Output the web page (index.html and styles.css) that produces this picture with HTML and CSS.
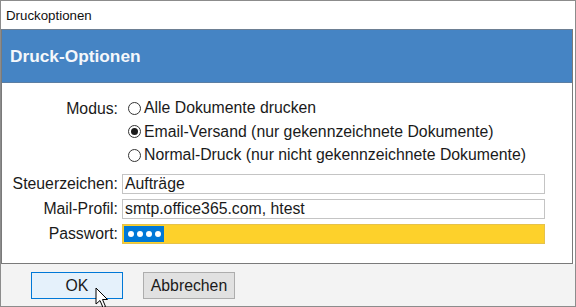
FILE: index.html
```html
<!DOCTYPE html>
<html lang="de">
<head>
<meta charset="utf-8">
<title>Druckoptionen</title>
<link rel="stylesheet" href="styles.css">
</head>
<body>
<div class="window">
  <div class="titlebar">Druckoptionen</div>
  <div class="panel">
    <div class="header">Druck-Optionen</div>
    <div class="content">
      <div class="row modus">
        <div class="label">Modus:</div>
        <div class="radios">
          <div class="radio"><span class="circle"></span><span>Alle Dokumente drucken</span></div>
          <div class="radio"><span class="circle checked"></span><span>Email-Versand (nur gekennzeichnete Dokumente)</span></div>
          <div class="radio"><span class="circle"></span><span>Normal-Druck (nur nicht gekennzeichnete Dokumente)</span></div>
        </div>
      </div>
      <div class="fields">
        <div class="row field">
          <div class="label">Steuerzeichen:</div>
          <div class="input">Aufträge</div>
        </div>
        <div class="row field">
          <div class="label">Mail-Profil:</div>
          <div class="input">smtp.office365.com, htest</div>
        </div>
        <div class="row field">
          <div class="label">Passwort:</div>
          <div class="input password"><span class="sel"><i></i><i></i><i></i><i></i></span></div>
        </div>
      </div>
    </div>
  </div>
  <div class="footer">
    <div class="btn ok">OK</div>
    <div class="btn">Abbrechen</div>
  </div>
  <svg class="cursor" width="14" height="22" viewBox="0 0 14 22">
    <path d="M1 1 L1 17 L5 13.5 L8 20.5 L10.5 19.5 L7.5 12.5 L12.5 12.5 Z" fill="#fff" stroke="#000" stroke-width="1" stroke-linejoin="miter"/>
  </svg>
</div>
</body>
</html>
```
FILE: styles.css
```css
* { box-sizing: border-box; }
html, body { margin: 0; padding: 0; background: #fff; }
body { font-family: "Liberation Sans", Arial, sans-serif; color: #1a1a1a; }

.window {
  position: relative;
  width: 576px;
  height: 307px;
  border: 1px solid #8c8c8c;
  background: #fff;
  display: flex;
  flex-direction: column;
}

.titlebar {
  height: 28px;
  line-height: 29px;
  padding-left: 5px;
  font-size: 13.3px;
  color: #111;
}

.panel {
  margin-right: 2px;
  border: 1px solid #7a7a7a;
  border-top-color: #6d7f93;
  display: flex;
  flex-direction: column;
}

.header {
  height: 53px;
  background: #4584c4;
  color: #f4f7fb;
  font-weight: bold;
  font-size: 17.3px;
  line-height: 52px;
  padding-left: 8px;
  border-bottom: 1px solid #5b7ea3;
}

.content {
  height: 180px;
  padding-top: 13.5px;
  font-size: 15.8px;
}

.row { display: flex; }
.label {
  width: 116px;
  text-align: right;
  flex: none;
}

.modus .label { line-height: 23.5px; }
.radios { margin-left: 10px; }
.radio {
  height: 23.5px;
  display: flex;
  align-items: center;
  gap: 3px;
}
.circle {
  width: 13px;
  height: 13px;
  border: 1px solid #333;
  border-radius: 50%;
  display: flex;
  align-items: center;
  justify-content: center;
  flex: none;
}
.circle.checked::after {
  content: "";
  width: 7px;
  height: 7px;
  border-radius: 50%;
  background: #1a1a1a;
}

.fields {
  margin-top: 7px;
  display: flex;
  flex-direction: column;
  gap: 5px;
}
.field { align-items: center; height: 20px; }
.field .label { line-height: 20px; }
.input {
  margin-left: 4px;
  width: 423px;
  height: 20px;
  border: 1px solid #c4c4c4;
  line-height: 18px;
  padding-left: 2px;
  background: #fff;
}
.input.password {
  background: #fdd12b;
  border-color: #e6c24a;
  padding: 1px 0 1px 1px;
  display: flex;
}
.sel {
  background: #0078d7;
  width: 40px;
  height: 16px;
  display: flex;
  align-items: center;
  gap: 3px;
  padding-left: 4px;
}
.sel i {
  width: 6px;
  height: 6px;
  border-radius: 50%;
  background: #fff;
}

.footer {
  flex: 1;
  background: #f3f3f3;
  padding: 8px 0 0 30px;
  display: flex;
  gap: 20px;
  align-items: flex-start;
}
.btn {
  width: 92px;
  height: 27px;
  border: 1px solid #adadad;
  background: #e1e1e1;
  font-size: 15.8px;
  line-height: 25px;
  text-align: center;
  color: #1a1a1a;
}
.btn.ok {
  background: #e5f1fb;
  border-color: #0078d7;
}

.cursor {
  position: absolute;
  left: 94px;
  top: 286px;
}
```
